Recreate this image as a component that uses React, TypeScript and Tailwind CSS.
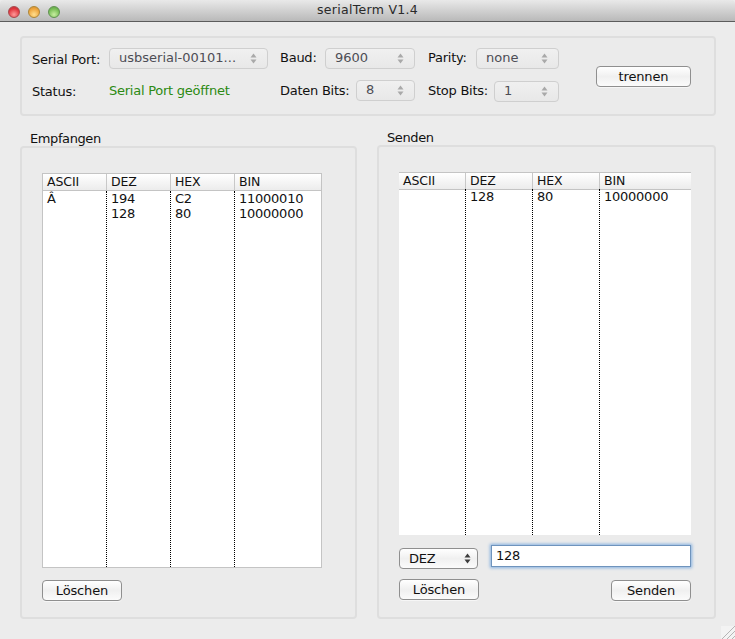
import React from 'react';

const font = "font-['DejaVu_Sans',sans-serif]";

function Updown({ dark = false }: { dark?: boolean }) {
  const fill = dark ? '#3c3c3c' : '#a9a9a9';
  return (
    <svg width="7" height="11" viewBox="0 0 7 11" className="shrink-0">
      <path d="M3.5 0.5 L6.5 4.5 H0.5 Z" fill={fill} />
      <path d="M3.5 10.5 L6.5 6.5 H0.5 Z" fill={fill} />
    </svg>
  );
}

function Select({ value, width, className = '' }: { value: string; width: string; className?: string }) {
  return (
    <div className={`${width} h-[21px] shrink-0 flex items-center justify-between pl-[9px] pr-[10px] rounded-[4px] border border-[#cfcfcf] bg-gradient-to-b from-[#f0f0f0] to-[#e8e8e8] text-[13px] tracking-[0px] text-[#4d4d55] ${className}`}>
      <span className="whitespace-nowrap pb-[2px]">{value}</span>
      <Updown />
    </div>
  );
}

function Button({ label, width = 'w-[80px]' }: { label: string; width?: string }) {
  return (
    <button className={`${width} h-[21px] flex items-center justify-center rounded-[4px] border border-[#8f8f8f] bg-gradient-to-b from-[#ffffff] via-[#f0f0f0] to-[#fbfbfb] text-[13px] tracking-[-0.15px] text-[#111] shadow-[0_1px_0_#f6f6f6]`}>
      {label}
    </button>
  );
}

type Row = { ascii: string; dez: string; hex: string; bin: string };

function DataTable({ rows, cols, className, rowClass }: { rows: Row[]; cols: string[]; className: string; rowClass: string }) {
  const dotted = 'border-l border-dotted border-black';
  return (
    <div className={`flex flex-col bg-white ${className}`}>
      <div className="flex h-[17px] shrink-0 border-b border-[#c4c4c4] bg-gradient-to-b from-[#ffffff] to-[#ececec] text-[12.5px] tracking-[-0.1px] leading-[16px] text-[#111]">
        {['ASCII', 'DEZ', 'HEX', 'BIN'].map((h, i) => (
          <div key={h} className={`${cols[i]} pl-[4px] ${i > 0 ? 'border-l border-[#c8c8c8]' : ''}`}>
            {h}
          </div>
        ))}
      </div>
      <div className={`flex flex-1 min-h-0 text-[13px] leading-[15px] tracking-[-0.25px] text-[#111] ${rowClass}`}>
        <div className={`${cols[0]} pl-[4px]`}>
          {rows.map((r, i) => <div key={i} className="h-[15px]">{r.ascii}</div>)}
        </div>
        <div className={`${cols[1]} pl-[4px] ${dotted}`}>
          {rows.map((r, i) => <div key={i} className="h-[15px]">{r.dez}</div>)}
        </div>
        <div className={`${cols[2]} pl-[4px] ${dotted}`}>
          {rows.map((r, i) => <div key={i} className="h-[15px]">{r.hex}</div>)}
        </div>
        <div className={`${cols[3]} pl-[4px] ${dotted}`}>
          {rows.map((r, i) => <div key={i} className="h-[15px]">{r.bin}</div>)}
        </div>
      </div>
    </div>
  );
}

function TitleBar() {
  return (
    <div className="relative h-[22px] shrink-0 flex items-center justify-center border-b border-[#5c5c5c] bg-gradient-to-b from-[#e9e9e9] to-[#b9b9b9] rounded-t-[4px]">
      <div className="absolute left-[8px] top-[6px] flex gap-[8px]">
        <span className="size-[12px] rounded-full border border-[#a8484c] bg-[radial-gradient(circle_at_50%_75%,#ff9a9a,#e0343c_65%,#b8353b)]" />
        <span className="size-[12px] rounded-full border border-[#ad8636] bg-[radial-gradient(circle_at_50%_75%,#ffdf8e,#eda33a_65%,#c98b35)]" />
        <span className="size-[12px] rounded-full border border-[#5f9150] bg-[radial-gradient(circle_at_50%_75%,#c8eea0,#76bc54_65%,#5d9b48)]" />
      </div>
      <span className="text-[12.5px] tracking-[0.3px] text-[#2a2a2a]">serialTerm V1.4</span>
    </div>
  );
}

export default function App() {
  const panel = 'rounded-[4px] border-2 border-[#dedede] bg-[#ebebeb]';
  return (
    <div className={`relative w-[735px] h-[639px] overflow-hidden flex flex-col bg-[#ececec] ${font}`}>
      <TitleBar />

      <div className="flex flex-col flex-1 pl-[20px] pr-[19px] pt-[14px]">
        <div className={`${panel} h-[80px] flex items-start pl-[10px] pt-[10px] text-[13px] leading-[17px] tracking-[-0.25px] text-[#111]`}>
          <div className="flex flex-col gap-[11px] w-[564px] shrink-0">
            <div className="flex items-center h-[21px]">
              <span className="w-[77px] pt-[2px]">Serial Port:</span>
              <Select value="usbserial-00101..." width="w-[159px]" />
              <span className="ml-[12px] w-[45px] pb-[2px]">Baud:</span>
              <Select value="9600" width="w-[90px]" />
              <span className="ml-[13px] w-[48px] pb-[2px]">Parity:</span>
              <Select value="none" width="w-[83px]" />
            </div>
            <div className="flex items-center h-[21px]">
              <span className="w-[77px] pt-[2px]">Status:</span>
              <span className="w-[171px] pb-[1px] text-[#2c8a12]">Serial Port geöffnet</span>
              <span className="w-[76px] pb-[1px]">Daten Bits:</span>
              <Select value="8" width="w-[59px]" />
              <span className="ml-[13px] w-[66px]">Stop Bits:</span>
              <Select value="1" width="w-[65px]" className="mt-[2px]" />
            </div>
          </div>
          <div className="pt-[18px]">
            <Button label="trennen" width="w-[95px]" />
          </div>
        </div>

        <div className="flex flex-1 gap-[20px] mt-[13px]">
          <div className="w-[337px] flex flex-col">
            <div className="pl-[10px] pt-[1px] h-[17px] text-[13px] tracking-[-0.4px] leading-[17px] text-[#111]">Empfangen</div>
            <div className={`${panel} h-[473px] flex flex-col pl-[20px] pt-[25px]`}>
              <DataTable
                className="w-[280px] h-[395px] border border-[#c4c4c4]"
                rowClass=""
                cols={['w-[63px]', 'w-[64px]', 'w-[64px]', 'flex-1']}
                rows={[
                  { ascii: 'Â', dez: '194', hex: 'C2', bin: '11000010' },
                  { ascii: '', dez: '128', hex: '80', bin: '10000000' },
                ]}
              />
              <div className="mt-[12px]">
                <Button label="Löschen" />
              </div>
            </div>
          </div>

          <div className="w-[339px] flex flex-col">
            <div className="pl-[10px] pt-[1px] h-[16px] text-[13px] tracking-[-0.4px] leading-[16px] text-[#111]">Senden</div>
            <div className={`${panel} h-[474px] flex flex-col px-[20px] pt-[25px]`}>
              <DataTable
                className="w-[292px] h-[363px] border-t border-[#c4c4c4]"
                rowClass="-mt-[1px]"
                cols={['w-[66px]', 'w-[67px]', 'w-[67px]', 'flex-1']}
                rows={[{ ascii: '', dez: '128', hex: '80', bin: '10000000' }]}
              />
              <div className="flex items-start gap-[13px] mt-[10px] w-[292px]">
                <div className="w-[79px] h-[21px] mt-[3px] flex items-center justify-between pl-[9px] pr-[6px] rounded-[4px] border border-[#8f8f8f] bg-gradient-to-b from-[#ffffff] via-[#f0f0f0] to-[#fbfbfb] text-[13px] tracking-[-0.2px] text-[#111]">
                  <span>DEZ</span>
                  <Updown dark />
                </div>
                <div className="flex-1 h-[22px] flex items-center pl-[4px] bg-white border border-[#6f94bd] shadow-[0_0_3px_1px_#85b0e0] text-[13px] tracking-[-0.25px] text-[#111]">
                  128
                </div>
              </div>
              <div className="flex items-start justify-between mt-[10px] w-[292px]">
                <Button label="Löschen" />
                <div className="mt-[1px]">
                  <Button label="Senden" />
                </div>
              </div>
            </div>
          </div>
        </div>
      </div>

      <svg width="14" height="13" viewBox="0 0 14 13" className="absolute right-0 bottom-0">
        <rect width="14" height="13" fill="#f3f3f3" />
        <path d="M1 13 L14 0 M6 13 L14 5 M11 13 L14 10" stroke="#b5b5b5" strokeWidth="1" />
      </svg>
    </div>
  );
}
